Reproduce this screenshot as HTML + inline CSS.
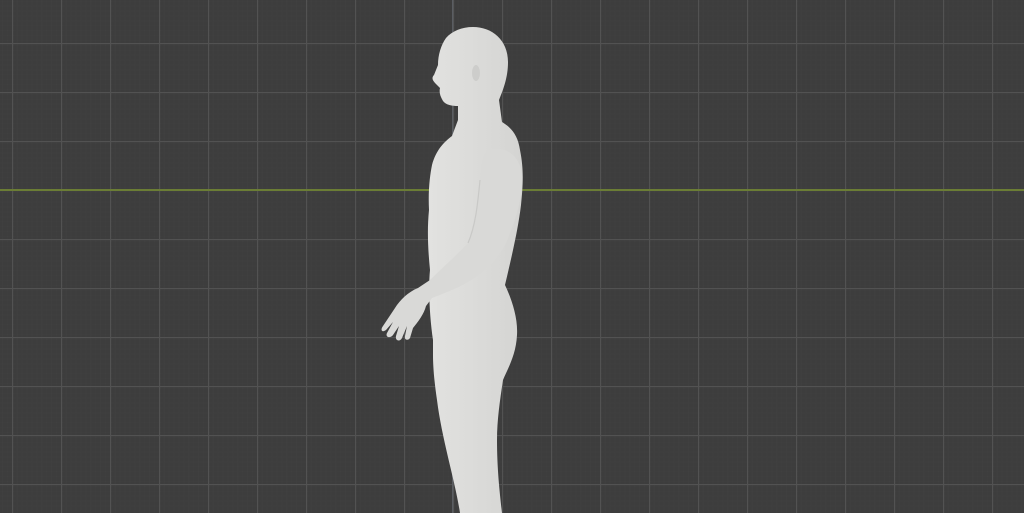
<!DOCTYPE html>
<html><head><style>
html,body{margin:0;padding:0;width:1024px;height:513px;overflow:hidden;background:#3d3d3d}
svg{display:block}
</style></head><body>
<svg width="1024" height="513" viewBox="0 0 1024 513" xmlns="http://www.w3.org/2000/svg">
<defs>
<pattern id="minor" width="4.9" height="4.9" patternUnits="userSpaceOnUse" x="12" y="1">
<path d="M0 0H4.9M0 0V4.9" stroke="#404040" stroke-width="1" fill="none"/>
</pattern>
<pattern id="major" width="49" height="49" patternUnits="userSpaceOnUse" x="12" y="43">
<path d="M0 0.5H49M0.5 0V49" stroke="#525252" stroke-width="1.3" fill="none"/>
</pattern>
<linearGradient id="skin" x1="0" x2="1" y1="0" y2="0">
<stop offset="0" stop-color="#e2e2e0"/><stop offset="1" stop-color="#d4d4d2"/>
</linearGradient>
</defs>
<rect width="1024" height="513" fill="#3d3d3d"/>
<rect width="1024" height="513" fill="url(#minor)"/>
<rect width="1024" height="513" fill="url(#major)"/>
<rect x="0" y="189" width="1024" height="2" fill="#6b7d35"/>
<rect x="452" y="0" width="1.3" height="513" fill="#5a5d62"/>
<!-- body -->
<path fill="url(#skin)" d="M473 27 C492 27 508 40 508 62 C508 78 503 90 499 100 L502 122 C512 128 518 136 520 150 C524 170 523 185 521 205 C518 230 512 255 505 285 C512 300 518 318 517 335 C516 355 508 368 503 380 C500 400 497 420 497 440 C497 470 500 495 502 513 L460 513 C455 480 442 440 437 400 C434 380 433 365 433 355 L433 340 C430 320 428 290 430 270 C428 250 427 230 429 210 C428 190 430 175 432 165 C436 150 444 142 452 136 L458 120 L458 106 C452 106 446 105 443 101 C440 96 439 92 440 88 L436 84 C433 81 431 78 434 75 L438 65 C438 55 441 45 446 38 C452 31 462 27 473 27 Z"/>
<!-- arm -->
<path fill="#d9d9d7" d="M488 150 C505 145 520 155 522 175 C523 200 514 225 505 245 C496 262 482 274 468 282 C454 290 442 294 432 298 L426 306 C424 314 418 322 413 328 L410 338 C408 341 404 340 405 336 L407 326 L402 338 C400 342 395 341 396 336 L399 326 L393 335 C390 339 385 337 387 333 L393 322 L386 330 C382 333 380 330 383 326 L395 308 C400 300 408 292 418 288 L430 280 C442 268 456 256 468 243 C476 225 478 200 480 180 C481 165 482 155 488 150 Z"/>
<path fill="none" stroke="#c9c9c7" stroke-width="1.2" d="M468 243 C476 225 478 200 480 180"/>
<ellipse cx="476" cy="73" rx="4" ry="8" fill="#cdcdcb"/>
</svg>
</body></html>
